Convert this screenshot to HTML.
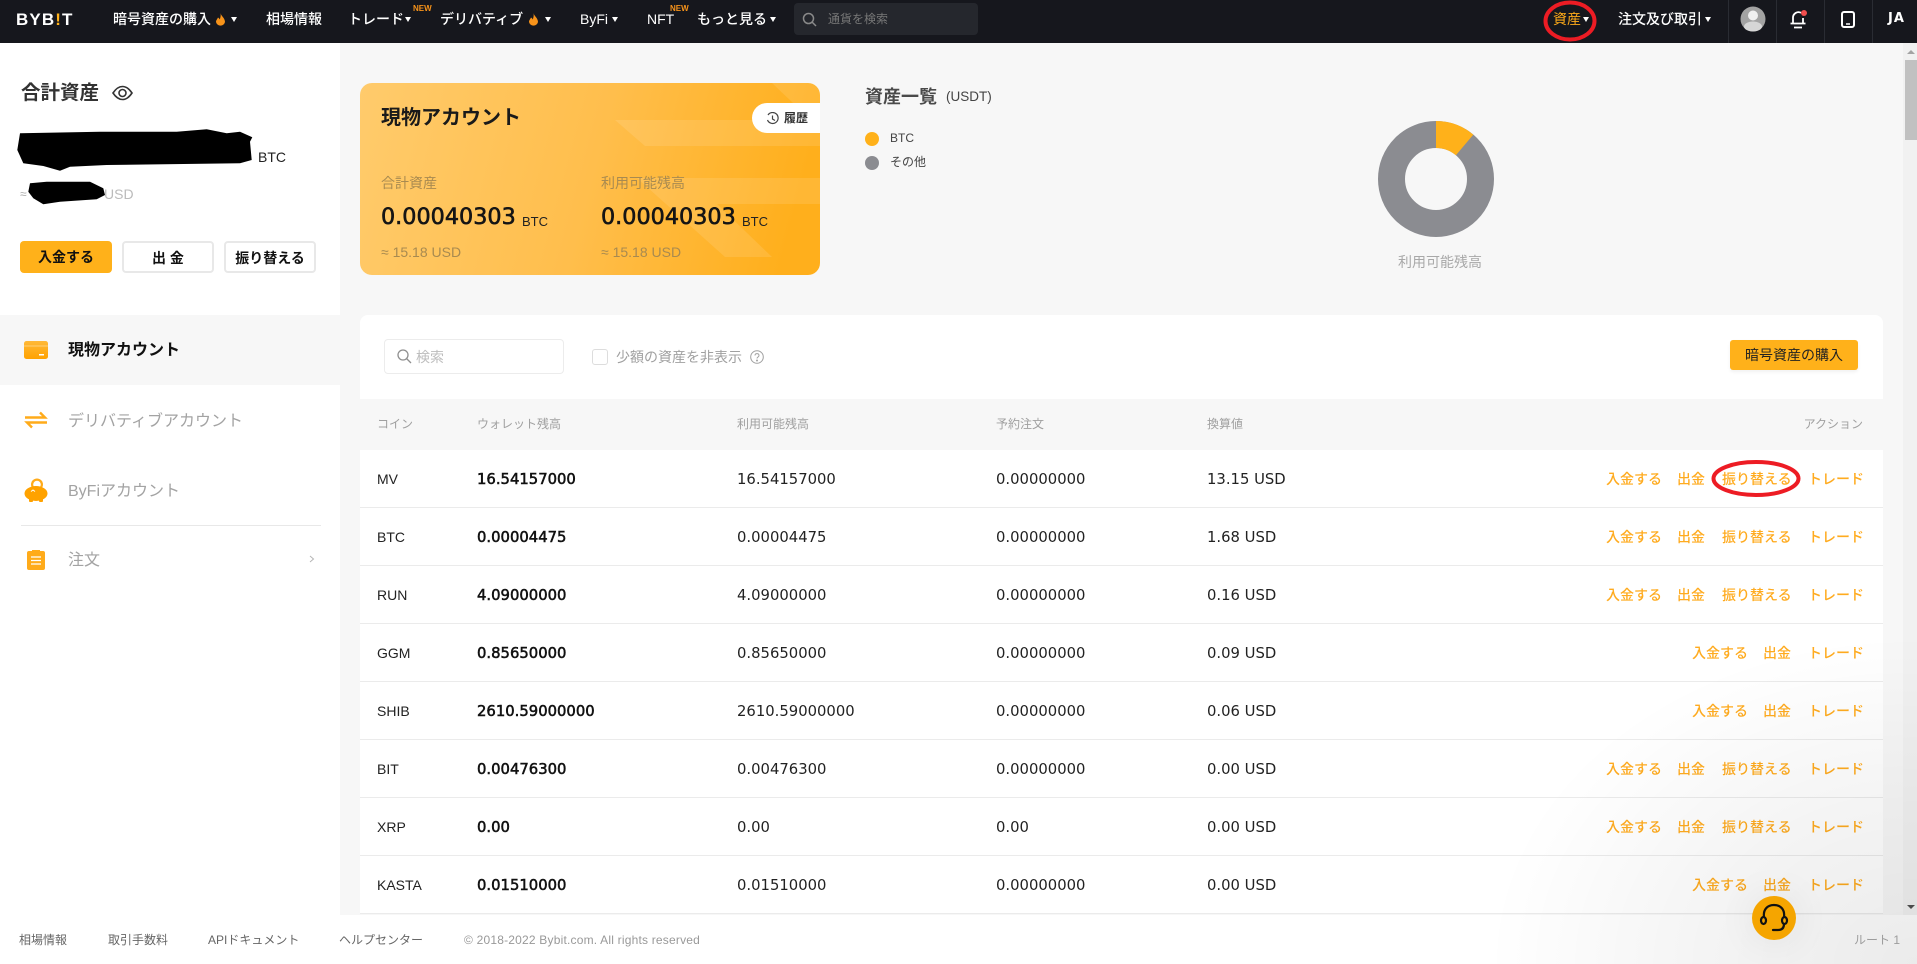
<!DOCTYPE html>
<html lang="ja"><head><meta charset="utf-8"><title>Bybit</title>
<style>
*{box-sizing:border-box}
html,body{margin:0;padding:0;width:1917px;height:964px;overflow:hidden;background:#f7f7f7}
body{font-family:"Liberation Sans","Noto Sans CJK JP",sans-serif;position:relative;color:#111}
.t{position:absolute;white-space:nowrap;line-height:20px;font-size:14px}
.a{position:absolute}
.n{color:#fff;font-weight:500}
.c{position:absolute;width:0;height:0;border-left:3.5px solid transparent;border-right:3.5px solid transparent;border-top:5px solid #fff}
.new{position:absolute;color:#f7931a;font-size:8px;font-weight:700;line-height:10px;top:4px}
.btn{position:absolute;top:241px;height:32px;width:92px;border-radius:4px;font-size:14px;font-weight:700;text-align:center;line-height:30px;border:2px solid #e8e8e8;background:#fff;color:#111}
.m{font-size:16px;color:#a3a3a3}
.h{font-size:12px;color:#a0a0a0;top:413.5px}
.r{position:absolute;left:360px;width:1523px;height:58px;background:#fff;border-bottom:1px solid #ebebeb}
.r span{position:absolute;top:19px;line-height:20px;white-space:nowrap;font-size:14px;color:#222}
.r .d{font-family:"DejaVu Sans",sans-serif;font-size:14.8px;top:20px}
.r .b{font-size:14.8px;-webkit-text-stroke:.55px #111;color:#111}
.r .s{font-family:"Liberation Sans",sans-serif;font-size:14px;top:19px}
.r .l{color:#ffab1f;font-weight:500}
.f{font-size:12px;color:#666;top:930px}
.v{font-family:'DejaVu Sans',sans-serif;font-size:22.300px;color:#151515;-webkit-text-stroke:.6px #151515}
</style></head><body>

<!-- header -->
<div class="a" style="left:0;top:0;width:1917px;height:43px;background:#16171d"></div>
<div class="t" style="left:16px;top:10px;color:#fff;font-weight:700;font-size:17px;letter-spacing:1.1px;font-family:'Liberation Sans',sans-serif">BYB<span style="color:#ffb11a">!</span>T</div>
<div class="t n" style="left:113px;top:9px">暗号資産の購入</div>
<svg class="a" style="left:215px;top:13px" width="11" height="14" viewBox="0 0 11 14"><path d="M5.500 0C6 3 10 5 10 9a4.600 4.600 0 0 1-9 0C1 7 2.500 6 3 4.500C4 5 4.500 6 4.800 6.500C5.500 4.500 6 2 5.500 0Z" fill="#f7931a"/></svg>
<div class="c" style="left:231px;top:17px"></div>
<div class="t n" style="left:266px;top:9px">相場情報</div>
<div class="t n" style="left:348px;top:9px">トレード</div><div class="c" style="left:405px;top:17px"></div><div class="new" style="left:413px">NEW</div>
<div class="t n" style="left:440px;top:9px">デリバティブ</div>
<svg class="a" style="left:528px;top:13px" width="11" height="14" viewBox="0 0 11 14"><path d="M5.500 0C6 3 10 5 10 9a4.600 4.600 0 0 1-9 0C1 7 2.500 6 3 4.500C4 5 4.500 6 4.800 6.500C5.500 4.500 6 2 5.500 0Z" fill="#f7931a"/></svg>
<div class="c" style="left:545px;top:17px"></div>
<div class="t n" style="left:580px;top:9px">ByFi</div><div class="c" style="left:612px;top:17px"></div>
<div class="t n" style="left:647px;top:9px">NFT</div><div class="new" style="left:670px">NEW</div>
<div class="t n" style="left:697px;top:9px">もっと見る</div><div class="c" style="left:770px;top:17px"></div>
<div class="a" style="left:794px;top:3px;width:184px;height:32px;background:#25272d;border-radius:4px"></div>
<svg class="a" style="left:802px;top:12px" width="15" height="15" viewBox="0 0 15 15" fill="none" stroke="#8a8a8a" stroke-width="1.500"><circle cx="6.500" cy="6.500" r="5"/><path d="M10 10l4 4"/></svg>
<div class="t" style="left:828px;top:9px;font-size:12px;color:#777">通貨を検索</div>

<div class="t" style="left:1553px;top:9px;color:#ffab1a">資産</div><div class="c" style="left:1583px;top:17px"></div>
<div class="t n" style="left:1618px;top:9px">注文及び取引</div><div class="c" style="left:1705px;top:17px"></div>
<div class="a" style="left:1728px;top:0;width:1px;height:43px;background:#2a2c33"></div>
<div class="a" style="left:1776px;top:0;width:1px;height:43px;background:#2a2c33"></div>
<div class="a" style="left:1824px;top:0;width:1px;height:43px;background:#2a2c33"></div>
<div class="a" style="left:1872px;top:0;width:1px;height:43px;background:#2a2c33"></div>
<svg class="a" style="left:1740px;top:6px" width="26" height="26" viewBox="0 0 26 26"><circle cx="13" cy="13" r="12.500" fill="#a3a3a3"/><circle cx="13" cy="9.500" r="5" fill="#f0f0f0"/><ellipse cx="13" cy="20.500" rx="9" ry="5" fill="#d6d6d6"/></svg>
<svg class="a" style="left:1788px;top:9px" width="22" height="20" viewBox="0 0 22 20" fill="none"><path d="M13 3.800A5.500 5.500 0 0 0 5 8.500V14M15 9v5M2.500 14.500h15M6 18.500h8" stroke="#fff" stroke-width="1.800"/><circle cx="16" cy="4" r="3" fill="#f24e4e"/></svg>
<svg class="a" style="left:1841px;top:11px" width="14" height="17" viewBox="0 0 14 17" fill="none"><rect x="1" y="1" width="12" height="15" rx="2" stroke="#fff" stroke-width="2"/><path d="M5 13h4" stroke="#fff" stroke-width="1.500"/></svg>
<div class="t" style="left:1888px;top:9px;color:#fff;font-weight:700;font-size:13px;letter-spacing:1px;font-family:'DejaVu Sans',sans-serif">JA</div>
<svg class="a" style="left:1542px;top:0" width="56" height="43" viewBox="0 0 56 43" fill="none"><ellipse cx="28" cy="21" rx="24.500" ry="18.500" stroke="#ed1c24" stroke-width="4"/></svg>

<!-- sidebar -->
<div class="a" style="left:0;top:43px;width:340px;height:872px;background:#fff"></div>
<div class="t" style="left:21px;top:83px;font-size:19.500px;font-weight:700;color:#333">合計資産</div>
<svg class="a" style="left:112px;top:85px" width="21" height="16" viewBox="0 0 21 16" fill="none" stroke="#333" stroke-width="1.600"><path d="M1 8C4 3.500 7 1.500 10.500 1.500S17 3.500 20 8c-3 4.500-6 6.500-9.500 6.500S4 12.500 1 8Z"/><circle cx="10.500" cy="8" r="3.500"/></svg>
<svg class="a" style="left:15px;top:127px" width="240" height="45" viewBox="0 0 240 45"><path d="M5 6.300L85 4.700L161.700 4.700L191.700 2.300L211.700 6.300L225 4.700L237.300 10.300L235 14.700L236.700 33L225 36.300L91.700 38L55 39.700L45 43.700L28.300 39L8.300 36.300L2.300 23Z" fill="#000"/></svg>
<div class="t" style="left:258px;top:147px;color:#222">BTC</div>
<div class="t" style="left:20px;top:184px;font-size:12px;color:#aaa">≈</div>
<div class="t" style="left:104px;top:184px;color:#bbb;font-size:14px">USD</div>
<svg class="a" style="left:27px;top:180px" width="80" height="26" viewBox="0 0 80 26"><path d="M3 3.300L19.700 1.700L63 1.700L76.300 8.300L78 15L69.700 19.300L33 21.700L16.300 24.300L6.300 18.300L1.300 11.700Z" fill="#000"/></svg>
<div class="btn" style="left:20px;background:#ffb11a;border:0;line-height:32px">入金する</div>
<div class="btn" style="left:122px">出 金</div>
<div class="btn" style="left:224px">振り替える</div>

<div class="a" style="left:0;top:315px;width:340px;height:70px;background:#f7f7f7"></div>
<svg class="a" style="left:24px;top:341px" width="24" height="18" viewBox="0 0 24 18"><defs><linearGradient id="o1" x1="0" y1="0" x2="0" y2="1"><stop offset="0" stop-color="#ffb938"/><stop offset="1" stop-color="#ffa200"/></linearGradient></defs><rect width="24" height="18" rx="2.500" fill="url(#o1)"/><path d="M0 5h24" stroke="#fff" stroke-width=".8" opacity=".5"/><rect x="15" y="13" width="5" height="1.500" fill="#fff"/></svg>
<div class="t" style="left:68px;top:339px;font-size:16px;font-weight:700;color:#111;margin-top:2px">現物アカウント</div>
<svg class="a" style="left:24px;top:411px" width="24" height="18" viewBox="0 0 24 18" fill="none" stroke="#ffab1a" stroke-width="2.400"><path d="M1 6.500h20L16 1.500M23 11.500H3l5 5"/></svg>
<div class="t m" style="left:68px;top:412px">デリバティブアカウント</div>
<svg class="a" style="left:24px;top:478px" width="24" height="25" viewBox="0 0 24 25"><circle cx="13" cy="6.500" r="6" fill="#ffab1a"/><circle cx="13" cy="6.500" r="3.800" fill="#fff"/><ellipse cx="12" cy="15.500" rx="11.500" ry="7.500" fill="#ffa200"/><rect x="5" y="19" width="4" height="5" rx="1" fill="#ffa200"/><rect x="15" y="19" width="4" height="5" rx="1" fill="#ffa200"/><path d="M7 13.500l2-1.500 2 1.500" stroke="#fff" fill="none"/></svg>
<div class="t m" style="left:68px;top:482px">ByFiアカウント</div>
<div class="a" style="left:21px;top:525px;width:300px;height:1px;background:#e8e8e8"></div>
<svg class="a" style="left:27px;top:550px" width="18" height="20" viewBox="0 0 18 20"><rect y="1" width="18" height="19" rx="2" fill="#ffab1a"/><rect x="5" y="0" width="8" height="3" fill="#ffab1a"/><path d="M4 7h10M4 10.500h10M4 14h10" stroke="#fff" stroke-width="1.300"/></svg>
<div class="t m" style="left:68px;top:551px">注文</div>
<svg class="a" style="left:309px;top:555px" width="6" height="8" viewBox="0 0 6 8" fill="none" stroke="#b5b5b5"><path d="M1 1l3.500 3L1 7"/></svg>

<!-- spot card -->
<div class="a" style="left:360px;top:83px;width:460px;height:192px;border-radius:12px;overflow:hidden;background:linear-gradient(105deg,#ffcb6c 0%,#ffbe4c 50%,#ffaf1c 92%)">
<svg class="a" style="left:0;top:0" width="460" height="192" viewBox="0 0 460 192" fill="#fff" fill-opacity=".11"><path d="M255 37H460V63H285Z"/><path d="M277 95H460V121H357L412 174H365Z"/><path d="M412 0H460V20H433Z"/></svg>
<div class="a" style="left:392px;top:20px;width:68px;height:30px;background:#fff;border-radius:15px 0 0 15px"></div>
<svg class="a" style="left:406px;top:29px" width="13" height="13" viewBox="0 0 13 13" fill="none" stroke="#444" stroke-width="1.200"><path d="M2 3A5.500 5.500 0 1 1 1.500 8"/><path d="M6.500 3.500v3.500l2.500 1.500"/></svg>
<div class="t" style="left:424px;top:25px;font-size:12px;font-weight:700;color:#333">履歴</div>
<div class="t" style="left:21px;top:25px;font-size:20px;font-weight:700;color:#1a1a1a">現物アカウント</div>
<div class="t" style="left:21px;top:90px;color:#a88a50">合計資産</div>
<div class="t" style="left:241px;top:90px;color:#a88a50">利用可能残高</div>
<div class="t v" style="left:21px;top:124px">0.00040303</div>
<div class="t" style="left:162px;top:129px;color:#222;font-size:13px">BTC</div>
<div class="t v" style="left:241px;top:124px">0.00040303</div>
<div class="t" style="left:382px;top:129px;color:#222;font-size:13px">BTC</div>
<div class="t" style="left:21px;top:159px;color:#a88a50">≈ 15.18 USD</div>
<div class="t" style="left:241px;top:159px;color:#a88a50">≈ 15.18 USD</div>
</div>

<!-- overview -->
<div class="t" style="left:865px;top:87px;font-size:18px;font-weight:700;color:#4a4a4a">資産一覧</div>
<div class="t" style="left:946px;top:87px;color:#444;font-size:13.500px">(USDT)</div>
<div class="a" style="left:865px;top:132px;width:14px;height:14px;border-radius:50%;background:#ffb11a"></div>
<div class="a" style="left:865px;top:156px;width:14px;height:14px;border-radius:50%;background:#8b8c91"></div>
<div class="t" style="left:890px;top:128px;font-size:12px;color:#444">BTC</div>
<div class="t" style="left:890px;top:152px;font-size:12px;color:#444">その他</div>
<svg class="a" style="left:1376px;top:119px" width="120" height="120" viewBox="0 0 120 120"><circle cx="60" cy="60" r="44.500" fill="none" stroke="#8b8c91" stroke-width="27"/><path d="M60 2A58 58 0 0 1 97.300 15.600L79.900 36.300A31 31 0 0 0 60 29Z" fill="#ffb11a"/></svg>
<div class="t" style="left:1398px;top:252px;color:#a8a8a8">利用可能残高</div>

<!-- table card -->
<div class="a" style="left:360px;top:315px;width:1523px;height:84px;background:#fff;border-radius:8px 8px 0 0"></div>
<div class="a" style="left:384px;top:339px;width:180px;height:35px;border:1px solid #ececec;border-radius:4px;background:#fff"></div>
<svg class="a" style="left:397px;top:349px" width="15" height="15" viewBox="0 0 15 15" fill="none" stroke="#8f8f8f" stroke-width="1.300"><circle cx="6" cy="6" r="5"/><path d="M9.500 9.500l4.500 4.500"/></svg>
<div class="t" style="left:416px;top:347px;color:#bdbdbd">検索</div>
<div class="a" style="left:592px;top:349px;width:16px;height:16px;border:1px solid #ddd;border-radius:3px"></div>
<div class="t" style="left:616px;top:347px;color:#a0a0a0">少額の資産を非表示</div>
<svg class="a" style="left:750px;top:350px" width="14" height="14" viewBox="0 0 14 14" fill="none" stroke="#a0a0a0"><circle cx="7" cy="7" r="6.300"/><path d="M5 5.500C5 3 9 3 9 5.500 9 7 7 7 7 8.500"/><circle cx="7" cy="10.500" r=".5"/></svg>
<div class="a" style="left:1730px;top:340px;width:128px;height:30px;background:#ffb11a;border-radius:3px;box-shadow:0 2px 3px rgba(0,0,0,.06);text-align:center;font-size:14px;line-height:30px;color:#222">暗号資産の購入</div>

<div class="a" style="left:360px;top:399px;width:1523px;height:51px;background:#f7f7f7"></div>
<div class="t h" style="left:377px">コイン</div>
<div class="t h" style="left:477px">ウォレット残高</div>
<div class="t h" style="left:737px">利用可能残高</div>
<div class="t h" style="left:996px">予約注文</div>
<div class="t h" style="left:1207px">換算値</div>
<div class="t h" style="right:54px">アクション</div>

<div class="r" style="top:450px"><span class="s" style="left:17px">MV</span><span class="d b" style="left:117px">16.54157000</span><span class="d" style="left:377px">16.54157000</span><span class="d" style="left:636px">0.00000000</span><span class="d" style="left:847px">13.15 USD</span><span class="l" style="left:1246px">入金する</span><span class="l" style="left:1317px">出金</span><span class="l" style="left:1362px">振り替える</span><span class="l" style="left:1448px">トレード</span></div>
<div class="r" style="top:508px"><span class="s" style="left:17px">BTC</span><span class="d b" style="left:117px">0.00004475</span><span class="d" style="left:377px">0.00004475</span><span class="d" style="left:636px">0.00000000</span><span class="d" style="left:847px">1.68 USD</span><span class="l" style="left:1246px">入金する</span><span class="l" style="left:1317px">出金</span><span class="l" style="left:1362px">振り替える</span><span class="l" style="left:1448px">トレード</span></div>
<div class="r" style="top:566px"><span class="s" style="left:17px">RUN</span><span class="d b" style="left:117px">4.09000000</span><span class="d" style="left:377px">4.09000000</span><span class="d" style="left:636px">0.00000000</span><span class="d" style="left:847px">0.16 USD</span><span class="l" style="left:1246px">入金する</span><span class="l" style="left:1317px">出金</span><span class="l" style="left:1362px">振り替える</span><span class="l" style="left:1448px">トレード</span></div>
<div class="r" style="top:624px"><span class="s" style="left:17px">GGM</span><span class="d b" style="left:117px">0.85650000</span><span class="d" style="left:377px">0.85650000</span><span class="d" style="left:636px">0.00000000</span><span class="d" style="left:847px">0.09 USD</span><span class="l" style="left:1332px">入金する</span><span class="l" style="left:1403px">出金</span><span class="l" style="left:1448px">トレード</span></div>
<div class="r" style="top:682px"><span class="s" style="left:17px">SHIB</span><span class="d b" style="left:117px">2610.59000000</span><span class="d" style="left:377px">2610.59000000</span><span class="d" style="left:636px">0.00000000</span><span class="d" style="left:847px">0.06 USD</span><span class="l" style="left:1332px">入金する</span><span class="l" style="left:1403px">出金</span><span class="l" style="left:1448px">トレード</span></div>
<div class="r" style="top:740px"><span class="s" style="left:17px">BIT</span><span class="d b" style="left:117px">0.00476300</span><span class="d" style="left:377px">0.00476300</span><span class="d" style="left:636px">0.00000000</span><span class="d" style="left:847px">0.00 USD</span><span class="l" style="left:1246px">入金する</span><span class="l" style="left:1317px">出金</span><span class="l" style="left:1362px">振り替える</span><span class="l" style="left:1448px">トレード</span></div>
<div class="r" style="top:798px"><span class="s" style="left:17px">XRP</span><span class="d b" style="left:117px">0.00</span><span class="d" style="left:377px">0.00</span><span class="d" style="left:636px">0.00</span><span class="d" style="left:847px">0.00 USD</span><span class="l" style="left:1246px">入金する</span><span class="l" style="left:1317px">出金</span><span class="l" style="left:1362px">振り替える</span><span class="l" style="left:1448px">トレード</span></div>
<div class="r" style="top:856px"><span class="s" style="left:17px">KASTA</span><span class="d b" style="left:117px">0.01510000</span><span class="d" style="left:377px">0.01510000</span><span class="d" style="left:636px">0.00000000</span><span class="d" style="left:847px">0.00 USD</span><span class="l" style="left:1332px">入金する</span><span class="l" style="left:1403px">出金</span><span class="l" style="left:1448px">トレード</span></div>

<svg class="a" style="left:1710px;top:458px" width="92" height="41" viewBox="0 0 92 41" fill="none"><ellipse cx="46" cy="20.500" rx="42.500" ry="16.500" stroke="#ed1c24" stroke-width="4"/></svg>

<!-- scrollbar -->
<div class="a" style="left:1903px;top:43px;width:14px;height:873px;background:#f1f1f1"></div>
<div class="a" style="left:1905px;top:60px;width:12px;height:80px;background:#c1c1c1"></div>
<div class="a" style="left:1907px;top:50px;width:0;height:0;border-left:4px solid transparent;border-right:4px solid transparent;border-bottom:4px solid #a3a3a3"></div>
<div class="a" style="left:1907px;top:905px;width:0;height:0;border-left:4px solid transparent;border-right:4px solid transparent;border-top:4px solid #505050"></div>

<!-- footer -->
<div class="a" style="left:0;top:915px;width:1917px;height:49px;background:#fff"></div>
<div class="t f" style="left:19px">相場情報</div>
<div class="t f" style="left:108px">取引手数料</div>
<div class="t f" style="left:208px">APIドキュメント</div>
<div class="t f" style="left:339px">ヘルプセンター</div>
<div class="t f" style="left:464px;color:#999;letter-spacing:.2px">© 2018-2022 Bybit.com. All rights reserved</div>
<div class="t f" style="left:1854px;color:#a8a8a8">ルート 1</div>

<!-- soft shade overlay -->
<div class="a" style="left:1450px;top:620px;width:467px;height:344px;pointer-events:none;background:radial-gradient(ellipse 430px 330px at 100% 100%,rgba(0,0,0,.08) 0%,rgba(0,0,0,.045) 50%,rgba(0,0,0,0) 100%)"></div>

<div class="a" style="left:1752px;top:896px;width:44px;height:44px;border-radius:50%;background:#f5a500;box-shadow:0 0 40px rgba(0,0,0,.08)"></div>
<svg class="a" style="left:1758px;top:902px" width="32" height="32" viewBox="0 0 32 32" fill="none" stroke="#111" stroke-width="2.200" stroke-linecap="round"><path d="M6 15C5 8 9 3 16 3s11 5 10 12"/><ellipse cx="5.500" cy="18.500" rx="2.500" ry="3.500"/><ellipse cx="26.500" cy="18.500" rx="2.500" ry="3.500"/><path d="M26 22c0 4-2 6-6 6h-5"/></svg>

</body></html>
